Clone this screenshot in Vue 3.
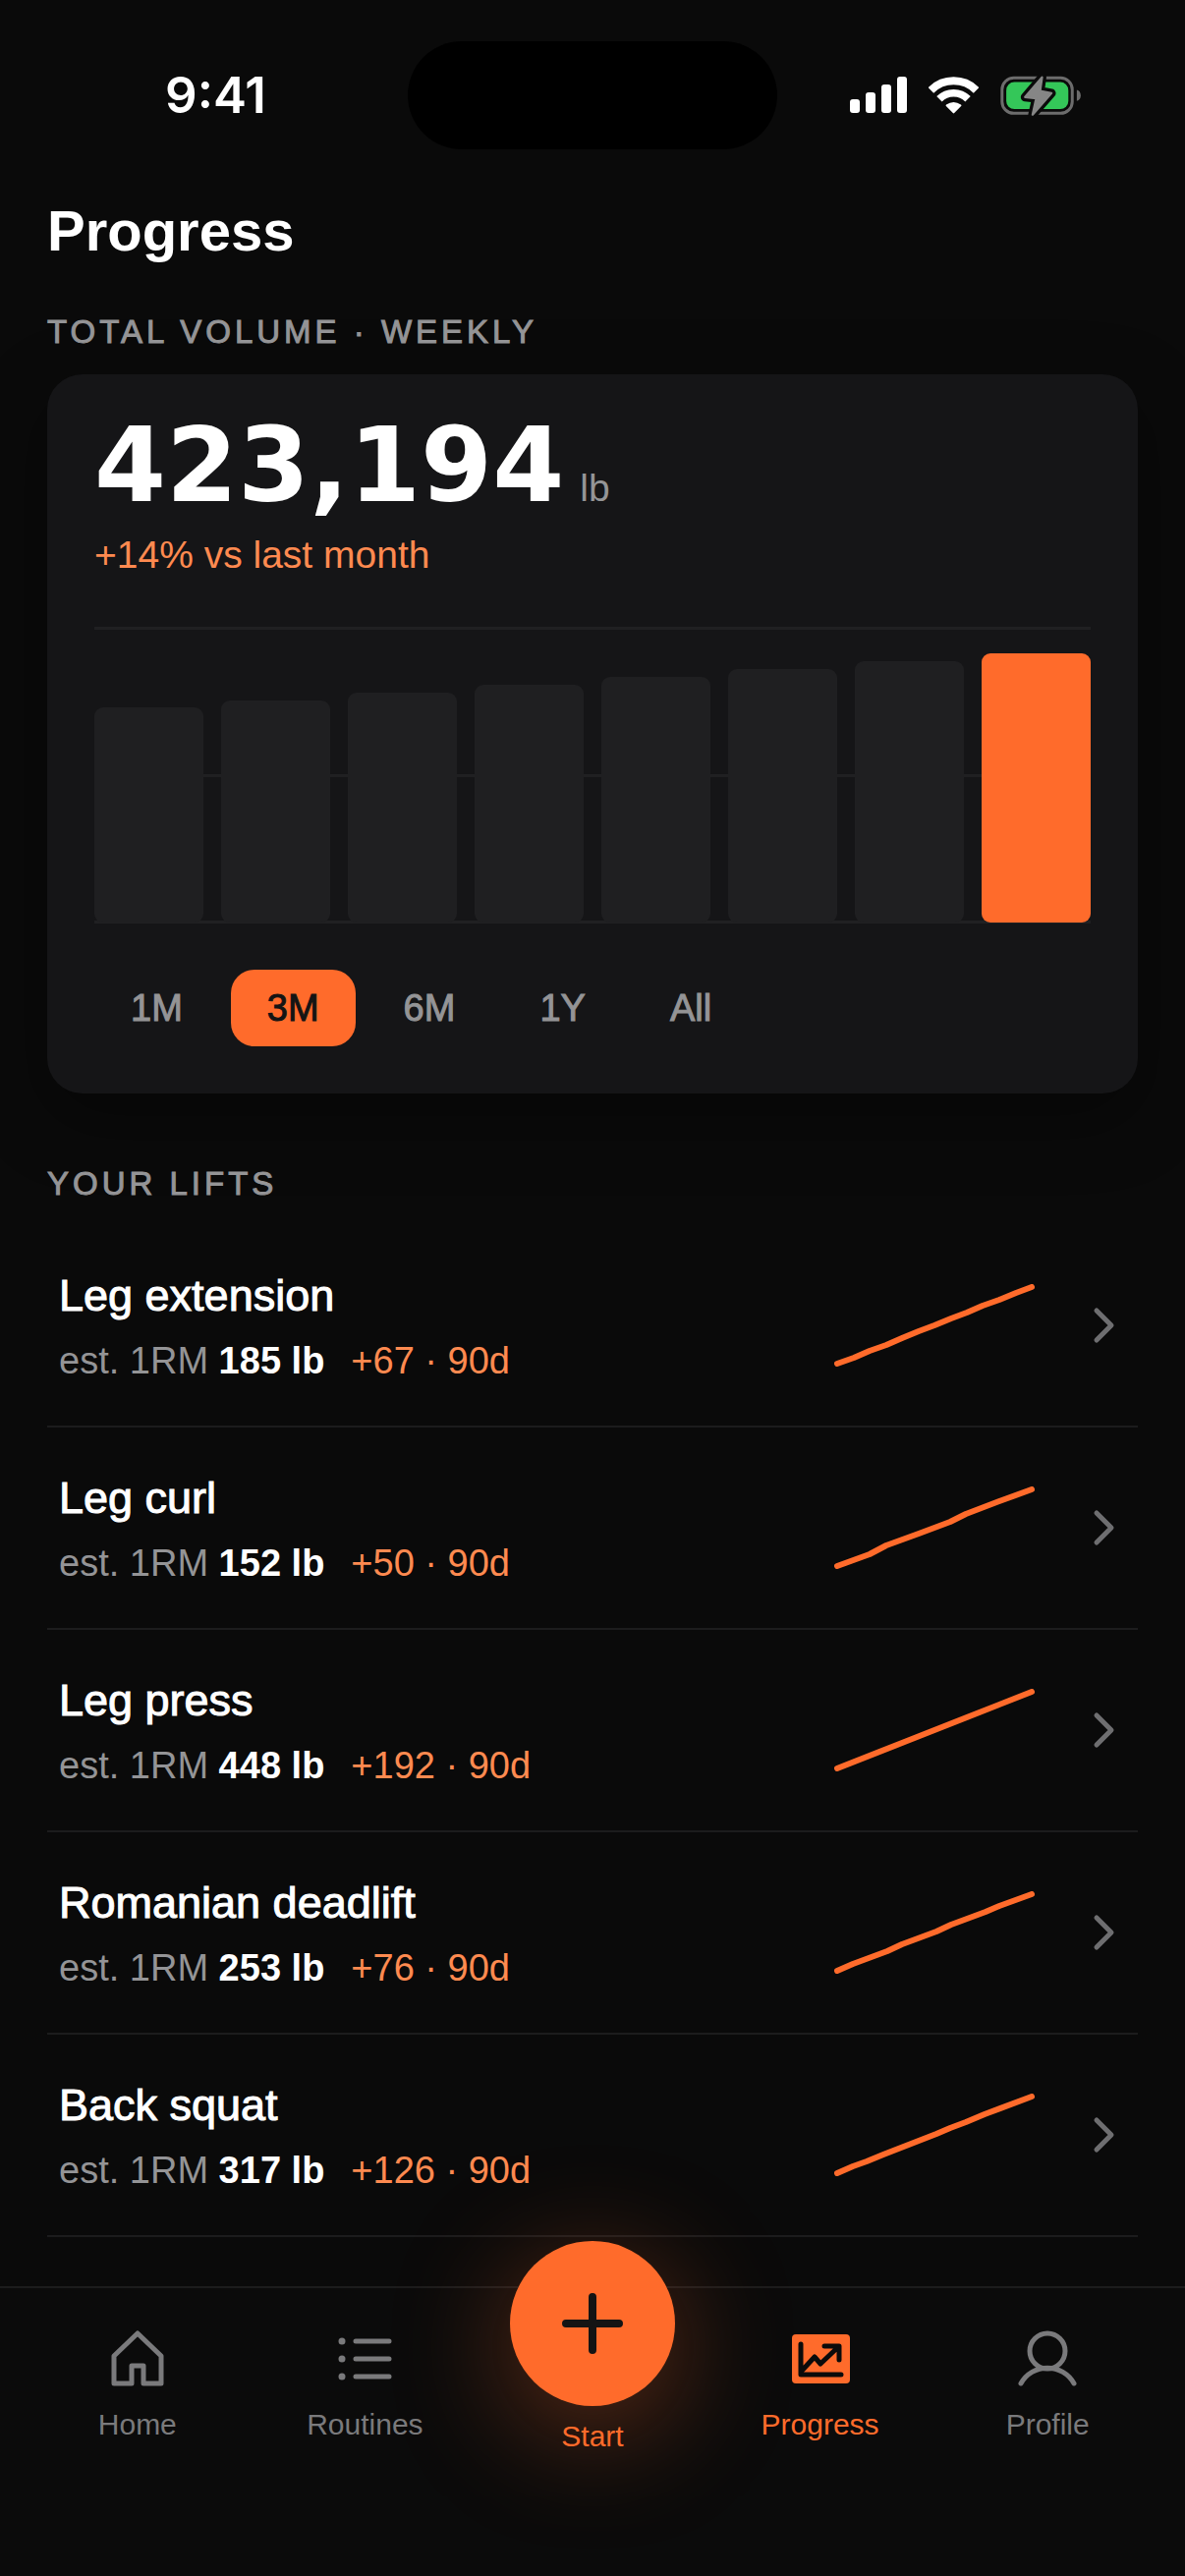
<script setup>
import { ref } from 'vue'

const bars = [72.6, 75.2, 77.9, 80.5, 83.1, 85.7, 88.4, 91]
const ranges = ['1M', '3M', '6M', '1Y', 'All']
const range = ref('3M')

const lifts = [
  { name: 'Leg extension', max: '185 lb', gain: '+67', line: '3,81 20,75 36,68 53,62 69,55 86,48 102,42 119,35 135,29 151,22 168,16 185,9 201,3' },
  { name: 'Leg curl', max: '152 lb', gain: '+50', line: '3,81 36,69 53,60 86,48 118,36 134,28 168,15 201,3' },
  { name: 'Leg press', max: '448 lb', gain: '+192', line: '3,81 69,55 135,29 201,3' },
  { name: 'Romanian deadlift', max: '253 lb', gain: '+76', line: '3,81 19,74 54,61 69,54 104,41 119,34 154,21 168,15 201,3' },
  { name: 'Back squat', max: '317 lb', gain: '+126', line: '3,81 19,74 33,69 50,62 104,41 118,35 134,29 153,21 201,3' },
]
</script>

<template>
  <div class="screen">
    <header class="status">
      <time class="clock">9:41</time>
      <div class="island"></div>
      <div class="indicators">
        <svg width="58" height="38" viewBox="0 0 58 38" fill="#fff" aria-label="Signal">
          <rect x="0" y="23" width="10" height="14" rx="3" />
          <rect x="16" y="16" width="10" height="21" rx="3" />
          <rect x="32" y="8" width="10" height="29" rx="3" />
          <rect x="48" y="0" width="10" height="37" rx="3" />
        </svg>
        <svg width="51" height="38" viewBox="315 85 154 115" fill="none" stroke="#fff" aria-label="Wi-Fi">
          <path d="M322 127A99 99 0 0 1 462 127" stroke-width="24" />
          <path d="M348 154A62 62 0 0 1 436 154" stroke-width="23" />
          <path d="M392 195L371 174Q392 159 413 174Z" fill="#fff" stroke-width="6" stroke-linejoin="round" />
        </svg>
        <svg width="83" height="43" viewBox="534 78 248 130" aria-label="Battery charging">
          <rect x="538" y="88" width="216" height="109" rx="36" fill="none" stroke="#6c6c6c" stroke-width="9" />
          <path d="M768 125Q780 129 780 142T768 159Z" fill="#6c6c6c" />
          <rect x="551" y="101" width="191" height="83" rx="25" fill="#34c759" />
          <path d="M661 86L609 147L643 151L632 201L690 135L655 128Z" fill="#0a0a0a" stroke="#0a0a0a" stroke-width="27" stroke-linejoin="round" />
          <path d="M661 86L609 147L643 151L632 201L690 135L655 128Z" fill="#868686" stroke="#868686" stroke-width="7" stroke-linejoin="round" />
        </svg>
      </div>
    </header>

    <main class="content">
      <h1 class="title">Progress</h1>

      <h2 class="label">TOTAL VOLUME · WEEKLY</h2>
      <section class="card">
        <p class="total"><strong>423,194</strong><span>lb</span></p>
        <p class="change">+14% vs last month</p>
        <div class="chart">
          <div class="gridlines"><i></i><i></i><i></i></div>
          <div class="bars">
            <div
              v-for="(height, i) in bars"
              :key="i"
              class="bar"
              :class="{ current: i === bars.length - 1 }"
              :style="{ height: height + '%' }"
            ></div>
          </div>
        </div>
        <div class="ranges">
          <button
            v-for="r in ranges"
            :key="r"
            type="button"
            class="range"
            :class="{ active: r === range }"
            @click="range = r"
          >{{ r }}</button>
        </div>
      </section>

      <h2 class="label lifts-label">YOUR LIFTS</h2>
      <ul class="lifts">
        <li v-for="lift in lifts" :key="lift.name">
          <a href="#" class="lift">
            <div class="lift-text">
              <h3>{{ lift.name }}</h3>
              <p>est. 1RM <b>{{ lift.max }}</b><span>{{ lift.gain }} · 90d</span></p>
            </div>
            <svg class="spark" width="204" height="84" viewBox="0 0 204 84">
              <polyline :points="lift.line" />
            </svg>
            <svg class="chevron" width="48" height="48" viewBox="0 0 48 48">
              <path d="M18 9L33 24L18 39" />
            </svg>
          </a>
        </li>
      </ul>
    </main>

    <nav class="tabs">
      <a href="#" class="tab">
        <svg width="72" height="72" viewBox="0 0 72 72">
          <path d="M36 10L12 33V61H30V43H42V61H60V33Z" />
        </svg>
        <span>Home</span>
      </a>
      <a href="#" class="tab">
        <svg width="72" height="72" viewBox="0 0 72 72">
          <path d="M27 18H61M27 36H61M27 54H61" />
          <g fill="currentColor" stroke="none">
            <circle cx="13" cy="18" r="3.5" />
            <circle cx="13" cy="36" r="3.5" />
            <circle cx="13" cy="54" r="3.5" />
          </g>
        </svg>
        <span>Routines</span>
      </a>
      <a href="#" class="tab start">
        <div class="fab">
          <svg width="72" height="72" viewBox="0 0 72 72">
            <path d="M36 9V63M9 36H63" />
          </svg>
        </div>
        <span>Start</span>
      </a>
      <a href="#" class="tab selected">
        <svg width="72" height="72" viewBox="0 0 72 72">
          <rect x="7" y="11" width="59" height="50" rx="4" fill="currentColor" stroke="none" />
          <path class="trend" d="M16 21V52H57M18 47L30 34L36 41L54 24M40 23H55V37" />
        </svg>
        <span>Progress</span>
      </a>
      <a href="#" class="tab">
        <svg width="72" height="72" viewBox="0 0 72 72">
          <circle cx="36" cy="28" r="18" />
          <path d="M9 61A31 31 0 0 1 63 61" />
        </svg>
        <span>Profile</span>
      </a>
    </nav>
  </div>
</template>

<style>
body {
  margin: 0;
  background: #0a0a0a;
}
</style>

<style scoped>
.screen {
  --accent: #ff6b2b;
  --accent-soft: #ff8a50;
  --muted: #949496;
  --line: #1c1c1d;
  display: flex;
  flex-direction: column;
  min-height: 100vh;
  background: #0a0a0a;
  color: #fff;
  font-family: "Liberation Sans", Arial, sans-serif;
}

h1, h2, h3, p, ul {
  margin: 0;
  padding: 0;
  font-weight: 400;
}

a {
  color: inherit;
  text-decoration: none;
}

svg {
  flex: none;
}

.status {
  display: grid;
  grid-template-columns: 1fr 376px 1fr;
  align-items: center;
  padding-top: 42px;
}

.clock {
  padding-left: 24px;
  text-align: center;
  font: 600 51px/60px Inter, sans-serif;
}

.island {
  height: 110px;
  border-radius: 55px;
  background: #000;
}

.indicators {
  display: flex;
  align-items: center;
  justify-content: center;
  gap: 22px;
  padding-right: 32px;
}

.content {
  padding: 48px 48px 0;
}

.title {
  font-size: 58px;
  line-height: 70px;
  font-weight: 700;
}

.label {
  margin: 48px 0 23px;
  font-size: 33px;
  line-height: 40px;
  letter-spacing: 4px;
  color: var(--muted);
  -webkit-text-stroke: 1px var(--muted);
}

.lifts-label {
  margin: 72px 0 22px;
}

.card {
  padding: 36px 48px 48px;
  border-radius: 36px;
  background: #151517;
  box-shadow: 0 24px 72px rgba(0, 0, 0, 0.4);
}

.total {
  display: flex;
  align-items: baseline;
  gap: 16px;
  color: var(--muted);
  font-size: 39px;
  line-height: 50px;
}

.total strong {
  font: 700 105px/115px "DejaVu Sans", sans-serif;
  color: #fff;
}

.change {
  margin-top: 8px;
  font-size: 39px;
  line-height: 50px;
  color: var(--accent-soft);
}

.chart {
  display: grid;
  height: 302px;
  margin: 48px 0 47px;
}

.gridlines, .bars {
  grid-area: 1 / 1;
  display: flex;
}

.gridlines {
  flex-direction: column;
  justify-content: space-between;
}

.gridlines i {
  height: 3px;
  background: #202022;
}

.bars {
  align-items: flex-end;
  gap: 18px;
  padding-bottom: 1px;
}

.bar {
  flex: 1;
  border-radius: 9px;
  background: #1f1f21;
}

.bar.current {
  background: var(--accent);
}

.ranges {
  display: flex;
  gap: 12px;
}

.range {
  height: 78px;
  padding: 0 37px;
  border: 0;
  border-radius: 24px;
  background: none;
  color: var(--muted);
  font: 400 38px/46px "Liberation Sans", Arial, sans-serif;
  -webkit-text-stroke: 1px currentColor;
}

.range.active {
  background: var(--accent);
  color: #141414;
}

.lifts {
  list-style: none;
}

.lift {
  display: flex;
  align-items: center;
  height: 204px;
  padding: 0 12px;
  border-bottom: 2px solid var(--line);
}

.lift-text {
  flex: 1;
}

.lift h3 {
  margin-bottom: 16px;
  font-size: 45px;
  line-height: 56px;
  -webkit-text-stroke: 1px currentColor;
}

.lift p {
  font-size: 38px;
  line-height: 44px;
  color: var(--muted);
}

.lift b {
  color: #fff;
}

.lift p span {
  margin-left: 27px;
  color: var(--accent-soft);
}

.spark {
  margin-right: 45px;
  fill: none;
  stroke: var(--accent);
  stroke-width: 6;
  stroke-linecap: round;
  stroke-linejoin: round;
}

.chevron {
  fill: none;
  stroke: #6e6e70;
  stroke-width: 5;
  stroke-linecap: round;
  stroke-linejoin: round;
}

.tabs {
  display: flex;
  align-items: flex-start;
  margin-top: auto;
  padding: 36px 24px 124px;
  border-top: 2px solid var(--line);
  background: #0b0b0b;
}

.tab {
  flex: 1;
  display: flex;
  flex-direction: column;
  align-items: center;
  gap: 13px;
  font-size: 30px;
  line-height: 36px;
  color: #7a7a7c;
}

.tab svg {
  fill: none;
  stroke: currentColor;
  stroke-width: 5;
  stroke-linecap: round;
  stroke-linejoin: round;
}

.tab .trend {
  stroke: #0b0b0b;
}

.selected, .start {
  color: var(--accent);
}

.fab {
  display: flex;
  align-items: center;
  justify-content: center;
  width: 168px;
  height: 168px;
  margin-top: -84px;
  border-radius: 50%;
  background: var(--accent);
  box-shadow: 0 24px 120px rgba(255, 107, 43, 0.36);
}

.tab .fab svg {
  stroke: #141414;
  stroke-width: 8;
}
</style>
